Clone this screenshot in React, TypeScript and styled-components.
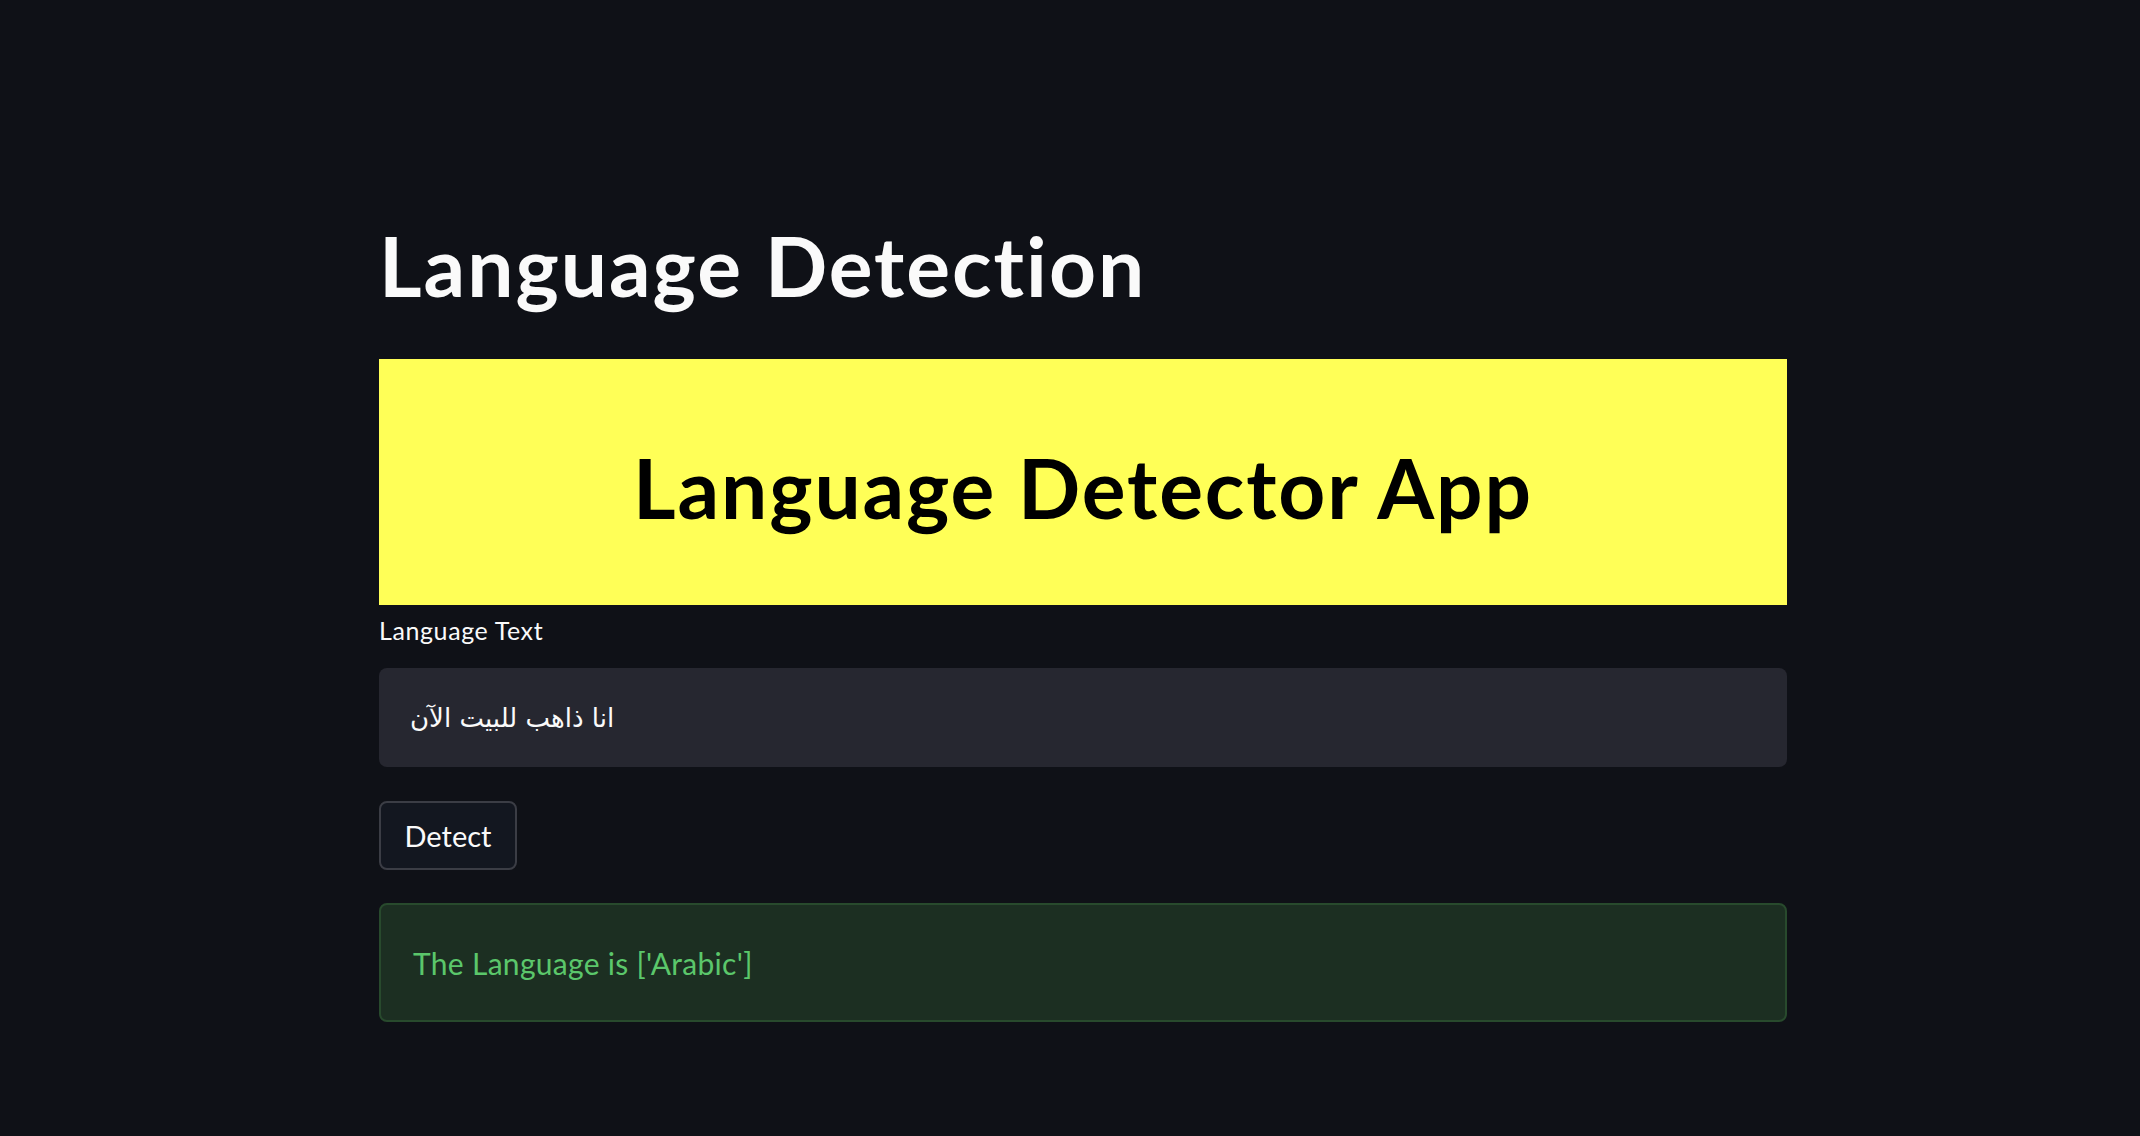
import React from 'react'
import styled, { createGlobalStyle } from 'styled-components'

const GlobalStyle = createGlobalStyle`
  html, body {
    margin: 0;
    padding: 0;
    background: #0f1117;
  }
  body {
    font-family: Lato, "Open Sans", "Liberation Sans", sans-serif;
    color: #fafafa;
  }
`

const StyledPage = styled.div`
  min-height: 1136px;
  background: #0f1117;
  padding-top: 216px;
  box-sizing: border-box;
`

const StyledMain = styled.main`
  width: 1408px;
  margin-left: 379px;
  display: flex;
  flex-direction: column;
`

const StyledTitle = styled.h1`
  margin: 0;
  font-size: 82px;
  line-height: 1.2;
  font-weight: 700;
  letter-spacing: 2px;
  color: #fafafa;
`

const StyledBanner = styled.div`
  margin-top: 45px;
  height: 246px;
  box-sizing: border-box;
  padding-top: 79px;
  background: #ffff57;
  text-align: center;
`

const StyledBannerText = styled.h1`
  margin: 0;
  font-size: 82px;
  line-height: 1.2;
  font-weight: 700;
  letter-spacing: 1.9px;
  color: #000000;
`

const StyledLabel = styled.label`
  margin-top: 10px;
  font-size: 25px;
  line-height: 1.2;
  letter-spacing: 0.6px;
  color: #fafafa;
`

const StyledInput = styled.div`
  margin-top: 23px;
  height: 99px;
  box-sizing: border-box;
  background: #262730;
  border-radius: 8px;
  display: flex;
  align-items: center;
  padding-left: 31px;
  font-family: "DejaVu Sans", "Noto Sans", sans-serif;
  font-size: 26px;
  color: #fafafa;
`

const StyledButton = styled.button`
  margin-top: 34px;
  width: 138px;
  height: 69px;
  box-sizing: border-box;
  background: #131720;
  border: 2px solid #3b3d45;
  border-radius: 8px;
  color: #fafafa;
  font-family: inherit;
  font-size: 29px;
  padding: 0;
  cursor: pointer;
`

const StyledSuccess = styled.div`
  margin-top: 33px;
  height: 119px;
  box-sizing: border-box;
  background: #1c2f22;
  border: 2px solid #284a2d;
  border-radius: 8px;
  display: flex;
  align-items: center;
  padding-left: 32px;
  font-size: 30px;
  letter-spacing: 0.3px;
  color: #5bc76b;
`

const App = () => (
  <>
    <GlobalStyle />
    <StyledPage>
      <StyledMain>
        <StyledTitle>Language Detection</StyledTitle>
        <StyledBanner>
          <StyledBannerText>Language Detector App</StyledBannerText>
        </StyledBanner>
        <StyledLabel>Language Text</StyledLabel>
        <StyledInput>
          <span dir="rtl">انا ذاهب للبيت الآن</span>
        </StyledInput>
        <div>
          <StyledButton>Detect</StyledButton>
        </div>
        <StyledSuccess>The Language is ['Arabic']</StyledSuccess>
      </StyledMain>
    </StyledPage>
  </>
)

export default App
